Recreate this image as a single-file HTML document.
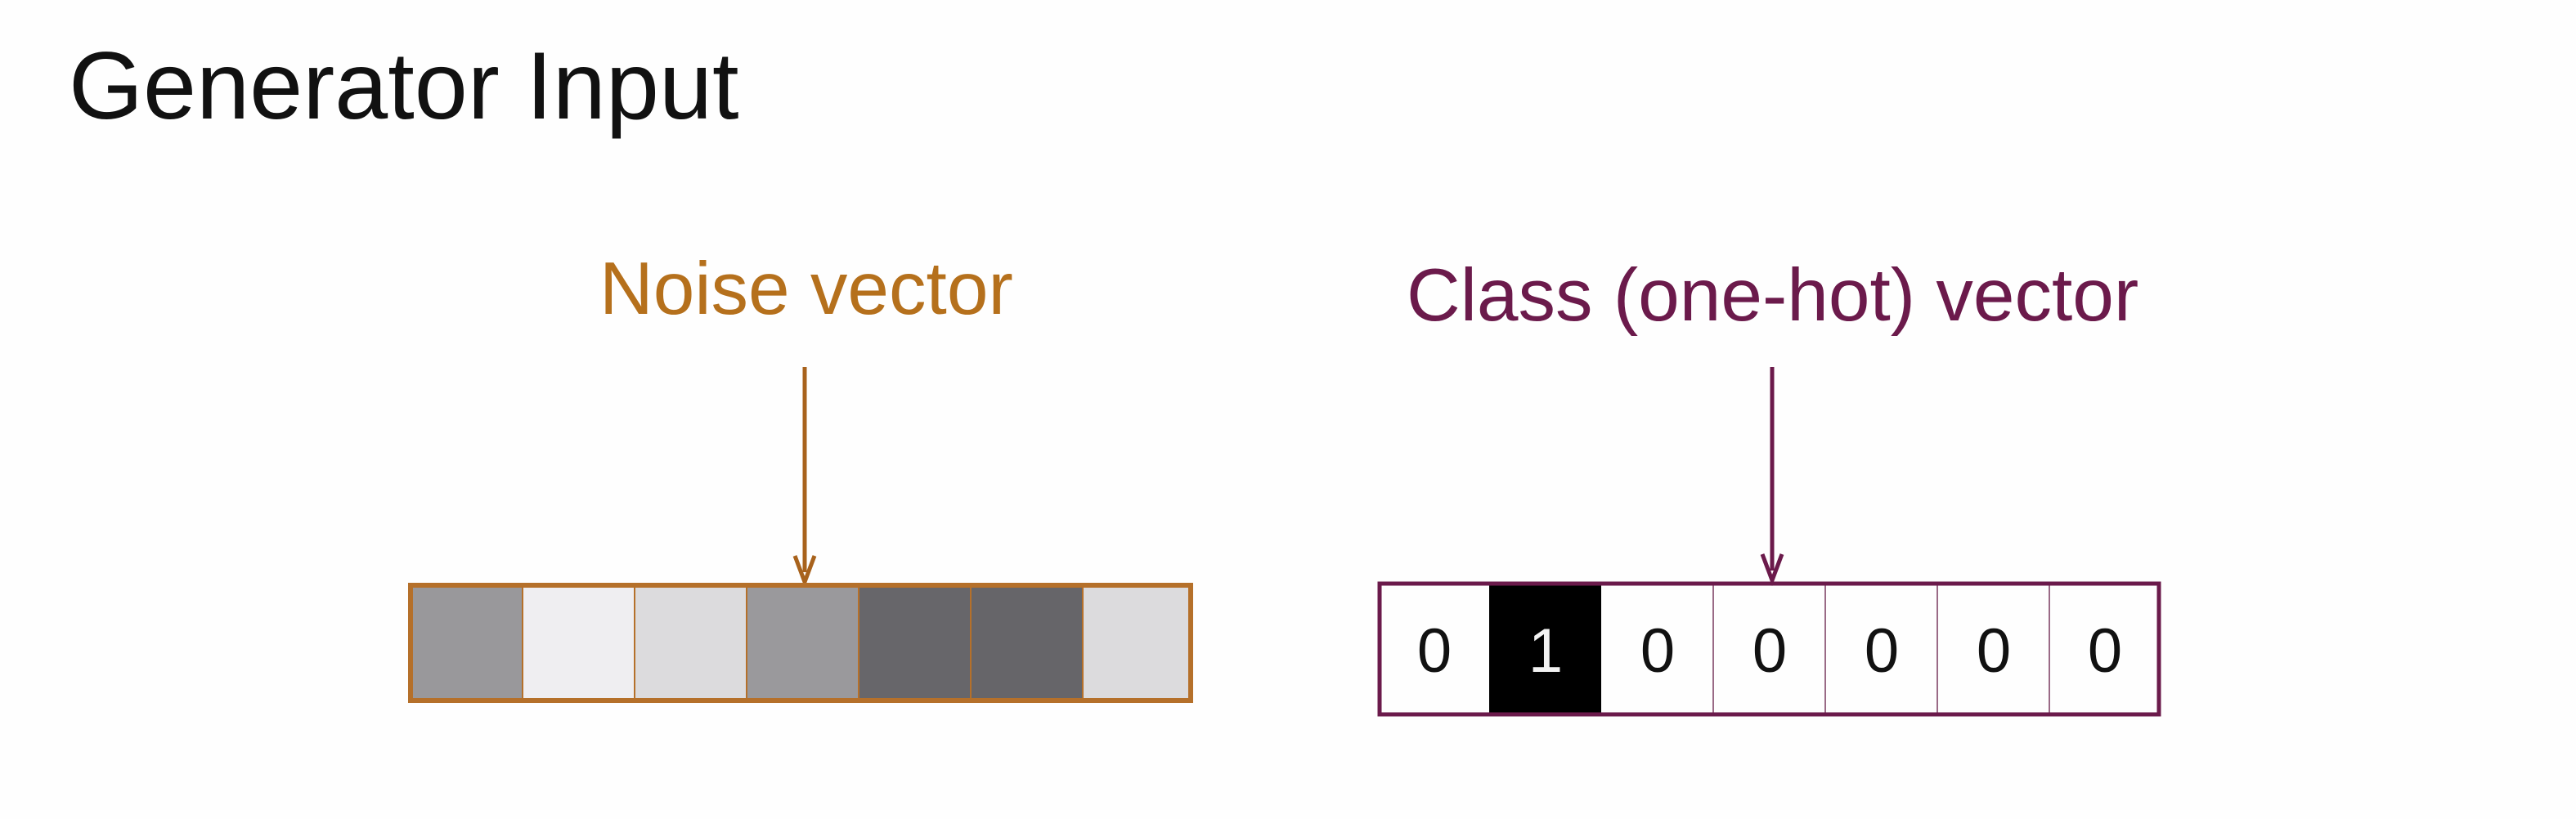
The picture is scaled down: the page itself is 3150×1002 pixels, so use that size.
<!DOCTYPE html>
<html><head><meta charset="utf-8"><style>
html,body{margin:0;padding:0;background:#fff;width:3150px;height:1002px;overflow:hidden}
svg{display:block}
</style></head><body>
<svg width="3150" height="1002" viewBox="0 0 3150 1002" xmlns="http://www.w3.org/2000/svg">
<rect width="3150" height="1002" fill="#fefefe"/>
<text x="84" y="145" font-family="Liberation Sans, sans-serif" font-size="117" fill="#111">Generator Input</text>
<text x="733" y="384" font-family="Liberation Sans, sans-serif" font-size="91" fill="#b5701c">Noise vector</text>
<text x="1720" y="392" font-family="Liberation Sans, sans-serif" font-size="91" fill="#6b1a4b">Class (one-hot) vector</text>
<line x1="984" y1="449" x2="984" y2="700" stroke="#a8621c" stroke-width="5"/>
<path d="M972 680 L984 712 L996 680" fill="none" stroke="#a8621c" stroke-width="5"/>
<line x1="2167" y1="449" x2="2167" y2="698" stroke="#6b1a4b" stroke-width="5"/>
<path d="M2155 678 L2167 710 L2179 678" fill="none" stroke="#6b1a4b" stroke-width="5"/>
<g>
<rect x="502" y="716" width="137" height="141" fill="#99989b"/>
<rect x="639" y="716" width="137" height="141" fill="#efeef1"/>
<rect x="776" y="716" width="137" height="141" fill="#dcdbdd"/>
<rect x="913" y="716" width="137" height="141" fill="#9a999c"/>
<rect x="1050" y="716" width="137" height="141" fill="#67666a"/>
<rect x="1187" y="716" width="137" height="141" fill="#666569"/>
<rect x="1324" y="716" width="132" height="141" fill="#dcdbdd"/>
<g stroke="#b5702a" stroke-width="2">
<line x1="639" y1="716" x2="639" y2="857"/><line x1="776" y1="716" x2="776" y2="857"/>
<line x1="913" y1="716" x2="913" y2="857"/><line x1="1050" y1="716" x2="1050" y2="857"/>
<line x1="1187" y1="716" x2="1187" y2="857"/><line x1="1324" y1="716" x2="1324" y2="857"/>
</g>
<rect x="502" y="716" width="954" height="141" fill="none" stroke="#b5702a" stroke-width="6"/>
</g>
<g>
<rect x="1821" y="714" width="137" height="160" fill="#000"/>
<g stroke="#9a6a86" stroke-width="2">
<line x1="2095" y1="714" x2="2095" y2="874"/><line x1="2232" y1="714" x2="2232" y2="874"/>
<line x1="2369" y1="714" x2="2369" y2="874"/><line x1="2506" y1="714" x2="2506" y2="874"/>
</g>
<rect x="1687" y="714" width="953" height="160" fill="none" stroke="#6b1a4b" stroke-width="5"/>
<g font-family="Liberation Sans, sans-serif" font-size="76" text-anchor="middle" fill="#111">
<text x="1754" y="822">0</text>
<text x="1890" y="822" fill="#f2f2f2">1</text>
<text x="2027" y="822">0</text>
<text x="2164" y="822">0</text>
<text x="2301" y="822">0</text>
<text x="2438" y="822">0</text>
<text x="2574" y="822">0</text>
</g>
</g>
</svg>
</body></html>
